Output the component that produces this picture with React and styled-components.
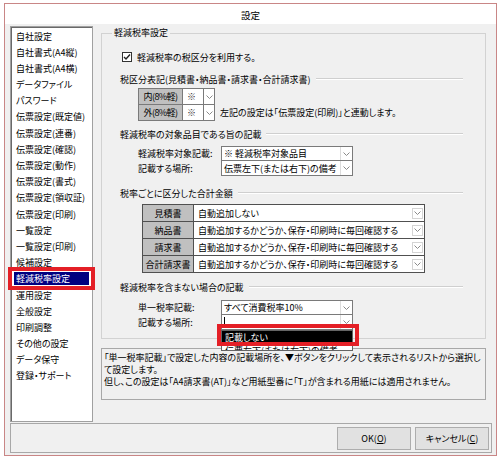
import React from "react";
import styled, { createGlobalStyle } from "styled-components";

const GlobalStyle = createGlobalStyle`
  html, body {
    margin: 0;
    padding: 0;
    background: #ffffff;
  }
  body {
    font-family: "Noto Sans CJK JP", "Noto Sans", sans-serif;
    font-size: 9px;
    font-feature-settings: "palt";
    color: #000;
  }
  * {
    box-sizing: border-box;
  }
`;

const menuItems = [
  "自社設定",
  "自社書式(A4縦)",
  "自社書式(A4横)",
  "データファイル",
  "パスワード",
  "伝票設定(既定値)",
  "伝票設定(連番)",
  "伝票設定(確認)",
  "伝票設定(動作)",
  "伝票設定(書式)",
  "伝票設定(領収証)",
  "伝票設定(印刷)",
  "一覧設定",
  "一覧設定(印刷)",
  "候補設定",
  "軽減税率設定",
  "運用設定",
  "全般設定",
  "印刷調整",
  "その他の設定",
  "データ保守",
  "登録・サポート",
];

const totals = [
  { doc: "見積書", value: "自動追加しない" },
  { doc: "納品書", value: "自動追加するかどうか、保存・印刷時に毎回確認する" },
  { doc: "請求書", value: "自動追加するかどうか、保存・印刷時に毎回確認する" },
  { doc: "合計請求書", value: "自動追加するかどうか、保存・印刷時に毎回確認する" },
];

function Chevron() {
  return (
    <svg width="7" height="4" viewBox="0 0 7 4">
      <polyline points="0.5,0.5 3.5,3.5 6.5,0.5" fill="none" stroke="#8a8a8a" strokeWidth="1" />
    </svg>
  );
}

export default function App() {
  return (
    <>
      <GlobalStyle />
      <Window>
        <TitleBar>設定</TitleBar>
        <Client>
          <Main>
            <Sidebar>
              {menuItems.map((item) => (
                <MenuItem key={item} $active={item === "軽減税率設定"}>
                  {item}
                </MenuItem>
              ))}
            </Sidebar>
            <RightPane>
              <GroupBox>
                <Legend>軽減税率設定</Legend>
                <GroupContent>
                  <CheckRow>
                    <CheckBox>
                      <svg width="8" height="8" viewBox="0 0 8 8">
                        <polyline points="1,4 3,6 7,1.5" fill="none" stroke="#222" strokeWidth="1.4" />
                      </svg>
                    </CheckBox>
                    軽減税率の税区分を利用する。
                  </CheckRow>

                  <SectionHead $top={10}>
                    <span>税区分表記(見積書・納品書・請求書・合計請求書)</span>
                    <Rule />
                  </SectionHead>
                  <MarkRow>
                    <MiniTable>
                      <MiniLabel>内(8%軽)</MiniLabel>
                      <MiniValue>※</MiniValue>
                      <MiniArrow><Chevron /></MiniArrow>
                      <MiniLabel>外(8%軽)</MiniLabel>
                      <MiniValue>※</MiniValue>
                      <MiniArrow><Chevron /></MiniArrow>
                    </MiniTable>
                    <Note>左記の設定は「伝票設定(印刷)」と連動します。</Note>
                  </MarkRow>

                  <SectionHead $top={7}>
                    <span>軽減税率の対象品目である旨の記載</span>
                    <Rule />
                  </SectionHead>
                  <FieldGrid $top={6}>
                    <FieldLabel>軽減税率対象記載:</FieldLabel>
                    <Combo>
                      <ComboText>※ 軽減税率対象品目</ComboText>
                      <ComboButton><Chevron /></ComboButton>
                    </Combo>
                    <FieldLabel>記載する場所:</FieldLabel>
                    <Combo $joined>
                      <ComboText>伝票左下(または右下)の備考</ComboText>
                      <ComboButton><Chevron /></ComboButton>
                    </Combo>
                  </FieldGrid>

                  <SectionHead $top={11}>
                    <span>税率ごとに区分した合計金額</span>
                    <Rule />
                  </SectionHead>
                  <TotalTable>
                    {totals.map((row) => (
                      <React.Fragment key={row.doc}>
                        <TotalLabel>{row.doc}</TotalLabel>
                        <TotalValue>
                          <span>{row.value}</span>
                          <SmallArrow><Chevron /></SmallArrow>
                        </TotalValue>
                      </React.Fragment>
                    ))}
                  </TotalTable>

                  <SectionHead $top={8}>
                    <span>軽減税率を含まない場合の記載</span>
                    <Rule />
                  </SectionHead>
                  <FieldGrid $top={7}>
                    <FieldLabel>単一税率記載:</FieldLabel>
                    <Combo>
                      <ComboText>すべて消費税率10%</ComboText>
                      <ComboButton><Chevron /></ComboButton>
                    </Combo>
                    <FieldLabel>記載する場所:</FieldLabel>
                    <Combo $joined>
                      <ComboText><Caret /></ComboText>
                      <ComboButton><Chevron /></ComboButton>
                    </Combo>
                    <DropList>
                      <DropItem $selected>記載しない</DropItem>
                      <DropItem>伝票左下(または右下)の備考</DropItem>
                    </DropList>
                    <Highlight />
                  </FieldGrid>
                </GroupContent>
              </GroupBox>

              <InfoBox>
                <div>「単一税率記載」で設定した内容の記載場所を、▼ボタンをクリックして表示されるリストから選択し</div>
                <div>て設定します。</div>
                <div>但し、この設定は「A4請求書(AT)」など用紙型番に「T」が含まれる用紙には適用されません。</div>
              </InfoBox>
            </RightPane>
          </Main>
          <ButtonBar>
            <Button>OK(<u>O</u>)</Button>
            <Button>キャンセル(<u>C</u>)</Button>
          </ButtonBar>
        </Client>
      </Window>
    </>
  );
}

const Window = styled.div`
  margin: 3px 0 0 4px;
  width: 493px;
  height: 453px;
  border: 1px solid #c98686;
  display: flex;
  flex-direction: column;
  background: #f0f0f0;
`;

const TitleBar = styled.div`
  height: 20px;
  background: #ffffff;
  display: flex;
  align-items: center;
  justify-content: center;
  font-size: 9.5px;
  padding-top: 1px;
`;

const Client = styled.div`
  flex: 1;
  display: flex;
  flex-direction: column;
  padding: 2px 4px 2px 5px;
`;

const Main = styled.div`
  display: flex;
  height: 396px;
`;

const Sidebar = styled.div`
  width: 83px;
  background: #ffffff;
  border: 1px solid #a0a0a0;
  box-shadow: inset 1px 1px 0 #696969;
  padding: 2.5px 3px 0 3px;
`;

const MenuItem = styled.div`
  position: relative;
  height: 13px;
  line-height: 13px;
  margin-bottom: 3.2px;
  padding-left: 2px;
  white-space: nowrap;
  background: ${(p) => (p.$active ? "#000080" : "transparent")};
  color: ${(p) => (p.$active ? "#ffffff" : "#000000")};

  &::after {
    content: "";
    display: ${(p) => (p.$active ? "block" : "none")};
    position: absolute;
    top: -5px;
    bottom: -5px;
    left: -6px;
    right: -6px;
    border: 4px solid #e41f26;
  }
`;

const RightPane = styled.div`
  width: 385px;
  margin-left: 8px;
  display: flex;
  flex-direction: column;
`;

const GroupBox = styled.fieldset`
  margin: 1px 0 0 0;
  padding: 0;
  border: 1px solid #d2d2d2;
  min-width: 0;
`;

const Legend = styled.legend`
  margin-left: 10px;
  padding: 0 2px;
  line-height: 12px;
  font-size: 9px;
`;

const GroupContent = styled.div`
  padding: 0 22px 8px 18px;
`;

const CheckRow = styled.div`
  margin-top: 12px;
  height: 12px;
  display: flex;
  align-items: center;
  gap: 5px;
  padding-left: 2px;
`;

const CheckBox = styled.span`
  width: 10px;
  height: 10px;
  border: 1px solid #333333;
  background: #ffffff;
  display: flex;
  align-items: center;
  justify-content: center;
`;

const SectionHead = styled.div`
  margin-top: ${(p) => p.$top}px;
  height: 12px;
  display: flex;
  align-items: center;
  gap: 5px;
  white-space: nowrap;
`;

const Rule = styled.div`
  flex: 1;
  height: 2px;
  border-top: 1px solid #cfcfcf;
  border-bottom: 1px solid #ffffff;
`;

const MarkRow = styled.div`
  margin: 3px 0 0 18px;
  display: flex;
  align-items: flex-end;
`;

const MiniTable = styled.div`
  display: grid;
  grid-template-columns: 44px 21px 11px;
  grid-auto-rows: 16px;
  border-top: 1px solid #7a7a7a;
  border-left: 1px solid #7a7a7a;

  & > * {
    border-right: 1px solid #7a7a7a;
    border-bottom: 1px solid #7a7a7a;
  }
`;

const MiniLabel = styled.div`
  background: #c0c0c0;
  font-size: 9px;
  letter-spacing: -0.6px;
  display: flex;
  align-items: center;
  justify-content: center;
  white-space: nowrap;
  overflow: hidden;
`;

const MiniValue = styled.div`
  background: #ffffff;
  display: flex;
  align-items: center;
  padding-left: 4px;
  color: #333333;
`;

const MiniArrow = styled.div`
  background: #ffffff;
  display: flex;
  align-items: center;
  justify-content: center;
`;

const Note = styled.div`
  margin-left: 5px;
  height: 16px;
  line-height: 16px;
  white-space: nowrap;
`;

const FieldGrid = styled.div`
  position: relative;
  margin: ${(p) => p.$top}px 0 0 18px;
  display: grid;
  grid-template-columns: 83px 132px;
  grid-auto-rows: 15px;
`;

const FieldLabel = styled.div`
  display: flex;
  align-items: center;
  white-space: nowrap;
`;

const Combo = styled.div`
  display: flex;
  background: #ffffff;
  border: 1px solid #7a7a7a;
  border-top: ${(p) => (p.$joined ? "none" : "1px solid #7a7a7a")};
`;

const ComboText = styled.div`
  flex: 1;
  display: flex;
  align-items: center;
  padding-left: 2px;
  white-space: nowrap;
  overflow: hidden;
`;

const ComboButton = styled.div`
  width: 12px;
  border-left: 1px solid #dcdcdc;
  display: flex;
  align-items: center;
  justify-content: center;
`;

const Caret = styled.span`
  width: 1px;
  height: 10px;
  background: #000000;
`;

const DropList = styled.div`
  position: absolute;
  left: 83px;
  top: 30px;
  width: 132px;
  height: 21px;
  background: #ffffff;
  border: 1px solid #646464;
  overflow: hidden;
  z-index: 2;
`;

const DropItem = styled.div`
  height: 13px;
  line-height: 13px;
  padding-left: 3px;
  white-space: nowrap;
  background: ${(p) => (p.$selected ? "#000000" : "#ffffff")};
  color: ${(p) => (p.$selected ? "#ffffff" : "#000000")};
`;

const Highlight = styled.div`
  position: absolute;
  left: 79px;
  top: 24px;
  width: 142px;
  height: 22px;
  border: 4px solid #e41f26;
  z-index: 3;
`;

const TotalTable = styled.div`
  margin: 5px 0 0 22px;
  display: grid;
  grid-template-columns: 51px 231px;
  grid-auto-rows: 17px;
  width: 283px;
  border-top: 1px solid #505050;
  border-left: 1px solid #505050;

  & > * {
    border-right: 1px solid #505050;
    border-bottom: 1px solid #505050;
  }
`;

const TotalLabel = styled.div`
  background: #c0c0c0;
  display: flex;
  align-items: center;
  justify-content: center;
  white-space: nowrap;
`;

const TotalValue = styled.div`
  background: #ffffff;
  display: flex;
  align-items: center;
  justify-content: space-between;
  padding: 0 1px 0 4px;
  white-space: nowrap;
`;

const SmallArrow = styled.span`
  width: 11px;
  height: 11px;
  border: 1px solid #d4d4d4;
  display: flex;
  align-items: center;
  justify-content: center;
`;

const InfoBox = styled.div`
  margin-top: 9px;
  height: 52px;
  border: 1px solid #a8a8a8;
  padding: 3px 0 0 2px;
  line-height: 12px;
  white-space: nowrap;
  overflow: hidden;
`;

const ButtonBar = styled.div`
  margin-top: 1px;
  height: 30px;
  border: 1px solid #a8a8a8;
  display: flex;
  align-items: center;
  justify-content: flex-end;
  gap: 4px;
  padding-right: 2px;
`;

const Button = styled.button`
  width: 74px;
  height: 23px;
  background: #e1e1e1;
  border: 1px solid #adadad;
  font-family: inherit;
  font-size: 9px;
  font-feature-settings: "palt";
  color: #000000;
  padding: 0;
`;
